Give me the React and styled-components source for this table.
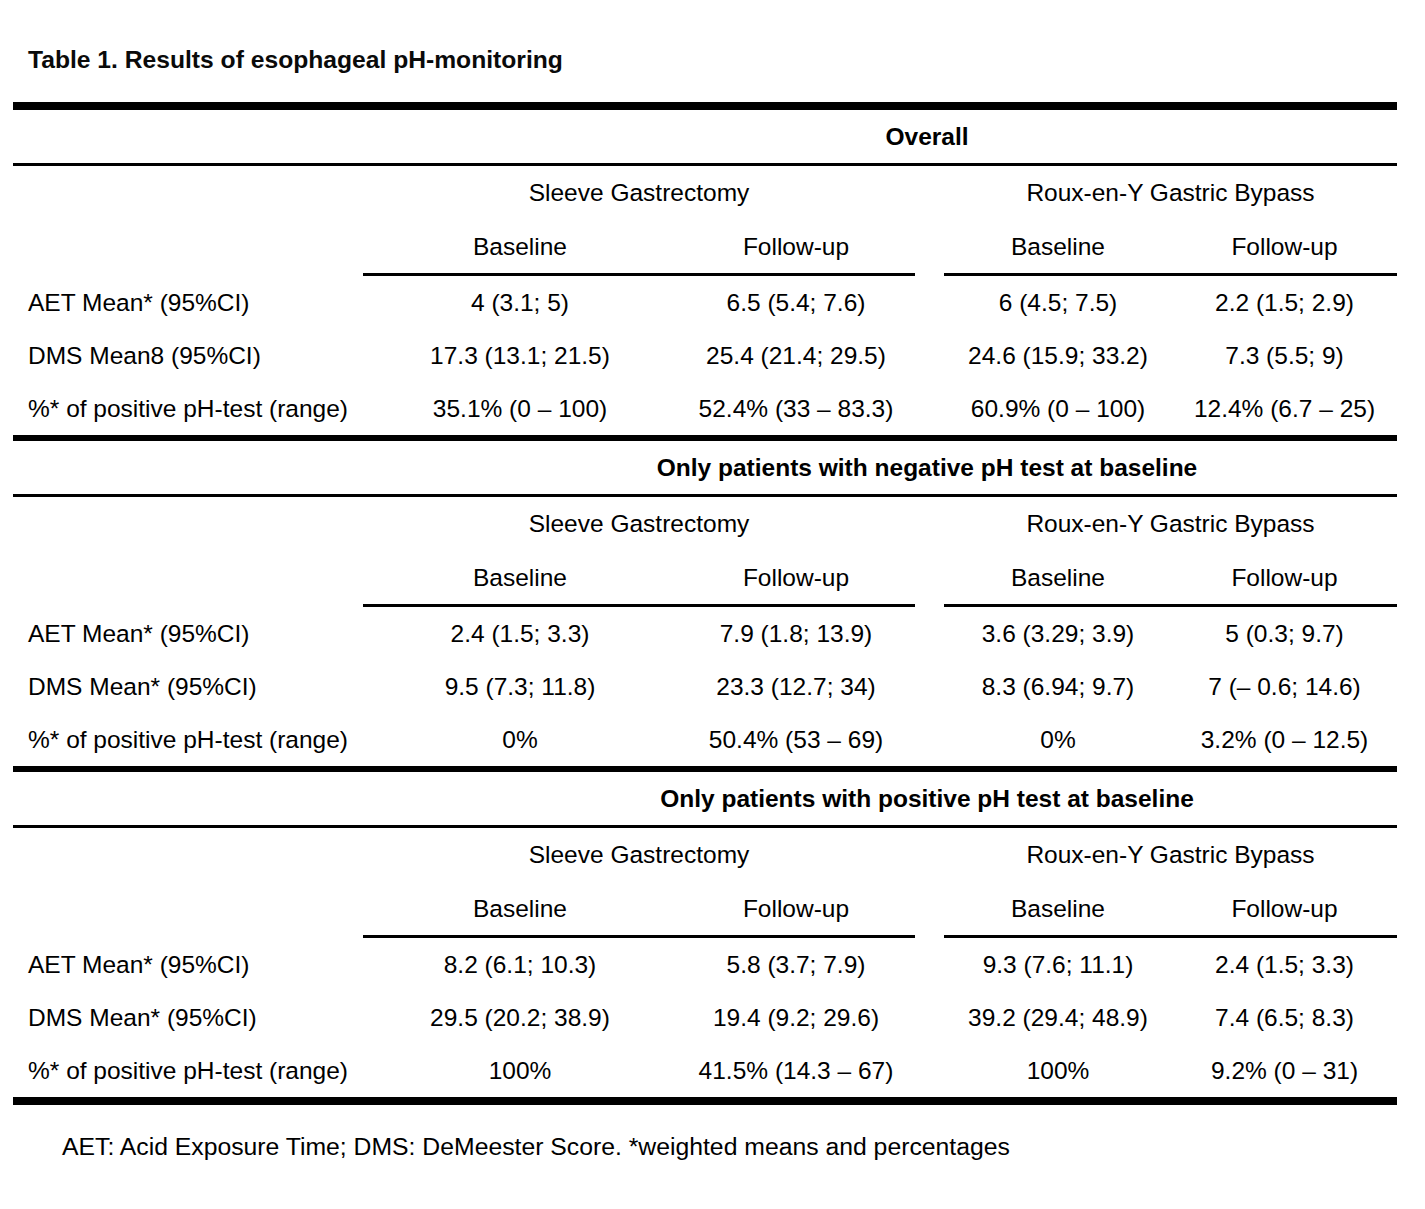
import React from 'react';
import styled, { createGlobalStyle } from 'styled-components';

const COLS = '350px 314px 238px 29px 228px 225px';

const sections = [
  {
    title: 'Overall',
    rows: [
      ['AET Mean* (95%CI)', '4 (3.1; 5)', '6.5 (5.4; 7.6)', '6 (4.5; 7.5)', '2.2 (1.5; 2.9)'],
      ['DMS Mean8 (95%CI)', '17.3 (13.1; 21.5)', '25.4 (21.4; 29.5)', '24.6 (15.9; 33.2)', '7.3 (5.5; 9)'],
      ['%* of positive pH-test (range)', '35.1% (0 – 100)', '52.4% (33 – 83.3)', '60.9% (0 – 100)', '12.4% (6.7 – 25)'],
    ],
  },
  {
    title: 'Only patients with negative pH test at baseline',
    rows: [
      ['AET Mean* (95%CI)', '2.4 (1.5; 3.3)', '7.9 (1.8; 13.9)', '3.6 (3.29; 3.9)', '5 (0.3; 9.7)'],
      ['DMS Mean* (95%CI)', '9.5 (7.3; 11.8)', '23.3 (12.7; 34)', '8.3 (6.94; 9.7)', '7 (– 0.6; 14.6)'],
      ['%* of positive pH-test (range)', '0%', '50.4% (53 – 69)', '0%', '3.2% (0 – 12.5)'],
    ],
  },
  {
    title: 'Only patients with positive pH test at baseline',
    rows: [
      ['AET Mean* (95%CI)', '8.2 (6.1; 10.3)', '5.8 (3.7; 7.9)', '9.3 (7.6; 11.1)', '2.4 (1.5; 3.3)'],
      ['DMS Mean* (95%CI)', '29.5 (20.2; 38.9)', '19.4 (9.2; 29.6)', '39.2 (29.4; 48.9)', '7.4 (6.5; 8.3)'],
      ['%* of positive pH-test (range)', '100%', '41.5% (14.3 – 67)', '100%', '9.2% (0 – 31)'],
    ],
  },
];

const GlobalStyle = createGlobalStyle`
  html, body {
    margin: 0;
    padding: 0;
    background: #fff;
  }
  body {
    font-family: "Liberation Sans", Arial, sans-serif;
    color: #000;
  }
`;

const Page = styled.div`
  width: 1425px;
  padding: 46px 0 60px 13px;
  box-sizing: border-box;
`;

const Caption = styled.h1`
  margin: 0 0 28px 15px;
  font-size: 24.65px;
  line-height: 28px;
  font-weight: 700;
  color: #0a0a0a;
`;

const Table = styled.div`
  width: 1384px;
  font-size: 24.5px;
`;

const Rule = styled.div`
  height: ${(p) => p.$h}px;
  background: #000;
`;

const Row = styled.div`
  display: grid;
  grid-template-columns: ${COLS};
  height: ${(p) => p.$h || 53}px;
  align-items: center;
`;

const Cell = styled.div`
  grid-column: ${(p) => p.$col || 'auto'};
  text-align: center;
  line-height: 28px;
  white-space: nowrap;
  padding-left: ${(p) => p.$indent || 0}px;
  font-weight: ${(p) => (p.$bold ? 700 : 400)};
`;

const Label = styled.div`
  padding-left: 15px;
  line-height: 28px;
  white-space: nowrap;
`;

const Bar = styled.div`
  grid-column: ${(p) => p.$col};
  height: 3px;
  background: #000;
`;

const Footnote = styled.p`
  margin: 28px 0 0 49px;
  font-size: 24.75px;
  line-height: 28px;
`;

const Section = ({ title, rows }) => (
  <>
    <Row $h={53}>
      <Cell $col="2 / 7" $indent={94} $bold>
        {title}
      </Cell>
    </Row>
    <Rule $h={3} />
    <Row $h={54}>
      <Cell $col="2 / 4">Sleeve Gastrectomy</Cell>
      <Cell $col="5 / 7">Roux-en-Y Gastric Bypass</Cell>
    </Row>
    <Row $h={53}>
      <Cell $col="2">Baseline</Cell>
      <Cell $col="3">Follow-up</Cell>
      <Cell $col="5">Baseline</Cell>
      <Cell $col="6">Follow-up</Cell>
    </Row>
    <Row $h={3}>
      <Bar $col="2 / 4" />
      <Bar $col="5 / 7" />
    </Row>
    {rows.map(([label, a, b, c, d]) => (
      <Row key={label + a}>
        <Label>{label}</Label>
        <Cell>{a}</Cell>
        <Cell>{b}</Cell>
        <Cell $col="5">{c}</Cell>
        <Cell>{d}</Cell>
      </Row>
    ))}
  </>
);

export default function App() {
  return (
    <Page>
      <GlobalStyle />
      <Caption>Table 1. Results of esophageal pH-monitoring</Caption>
      <Table>
        <Rule $h={8} />
        {sections.map((s, i) => (
          <React.Fragment key={s.title}>
            <Section {...s} />
            <Rule $h={i === sections.length - 1 ? 8 : 6} />
          </React.Fragment>
        ))}
      </Table>
      <Footnote>AET: Acid Exposure Time; DMS: DeMeester Score. *weighted means and percentages</Footnote>
    </Page>
  );
}
